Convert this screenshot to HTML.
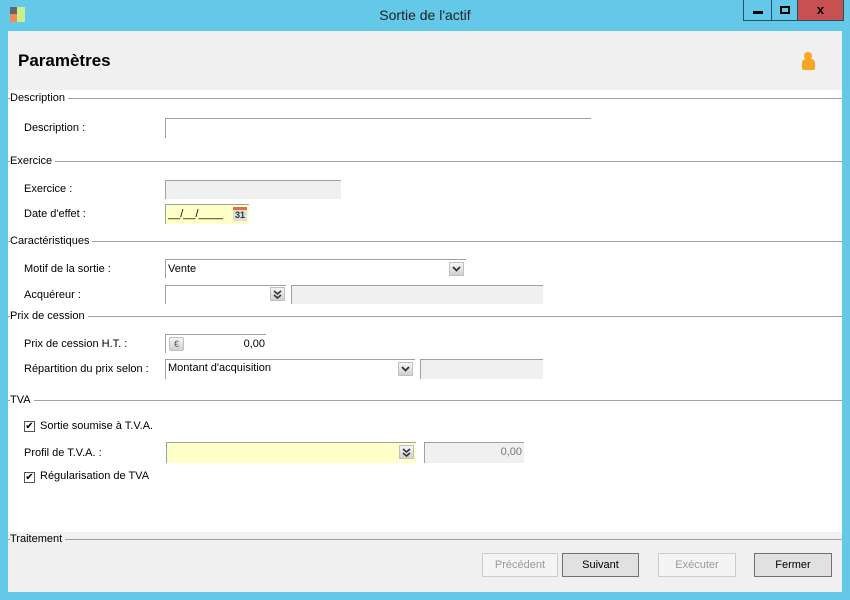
<!DOCTYPE html>
<html><head><meta charset="utf-8"><style>
*{box-sizing:border-box;margin:0;padding:0}
body{width:850px;height:600px;background:#64c8e8;font-family:"Liberation Sans",sans-serif;font-size:11px;color:#000;position:relative;overflow:hidden}
.a{position:absolute}
.client{left:8px;top:31px;width:834px;height:561px;background:#fff}
.t{position:absolute;white-space:nowrap}
.sec{position:absolute;left:8px;width:834px;height:1px;background:#a0a0a0}
.lbl{position:absolute;background:inherit;padding-right:3px;left:10px;font-size:11px}
.in{position:absolute;border-top:1px solid #a0a0a0;border-left:1px solid #a0a0a0;background:#fff;font-size:11px;padding:3px 2px;white-space:nowrap}
.g{background:#f0f0f0}
.y{background:#ffffc8}
.dd{position:absolute;width:15px;height:14px;background:linear-gradient(#f6f6f6,#d0d0d0);border:1px solid #c0c0c0}
.dd svg{position:absolute;left:2px;top:2px}
.btn{position:absolute;top:553px;height:24px;border:1px solid #adadad;background:#e5e5e5;text-align:center;line-height:22px;font-size:11px}
.dis{background:#f4f4f4;border-color:#ccc;color:#999}
.cb{position:absolute;width:11px;height:11px;border:1px solid #555;background:#fff;font-size:10px;line-height:9px;text-align:center}
</style></head><body>
<div class="a" style="left:10px;top:7px;width:7px;height:7px;background:#666"></div>
<div class="a" style="left:10px;top:14px;width:7px;height:8px;background:#f08c5a"></div>
<div class="a" style="left:17px;top:7px;width:8px;height:15px;background:#c8f08c"></div>
<div class="t" style="left:0;width:850px;text-align:center;top:7px;font-size:14px;color:#222">Sortie de l'actif</div>
<div class="a" style="left:743px;top:0;width:29px;height:21px;border:1px solid #2a4e66;border-top:none"></div>
<div class="a" style="left:753px;top:11px;width:10px;height:3px;background:#000"></div>
<div class="a" style="left:771px;top:0;width:27px;height:21px;border:1px solid #2a4e66;border-top:none;border-left:none"></div>
<div class="a" style="left:780px;top:6px;width:10px;height:8px;border:2px solid #000"></div>
<div class="a" style="left:797px;top:0;width:47px;height:21px;background:#c75050;border:1px solid #2a4e66;border-top:none;color:#000;font-weight:bold;text-align:center;font-size:13px;line-height:20px">x</div>
<div class="a client"></div>
<div class="a" style="left:8px;top:31px;width:834px;height:59px;background:#f0f0f0"></div>
<div class="t" style="left:18px;top:51px;font-size:17px;font-weight:bold">Paramètres</div>
<div class="a" style="left:804px;top:52px;width:8px;height:8px;border-radius:50%;background:#f5a623"></div>
<div class="a" style="left:802px;top:59px;width:13px;height:11px;border-radius:4px 4px 2px 2px;background:#f5a623"></div>
<div class="a" style="left:8px;top:532px;width:834px;height:60px;background:#f0f0f0"></div>

<div class="sec" style="top:98px"></div><div class="lbl" style="top:92px;background:#fff">Description</div>
<div class="t" style="left:24px;top:122px">Description :</div>
<div class="in" style="left:165px;top:118px;width:426px;height:20px"></div>

<div class="sec" style="top:161px"></div><div class="lbl" style="top:155px;background:#fff">Exercice</div>
<div class="t" style="left:24px;top:183px">Exercice :</div>
<div class="in g" style="left:165px;top:180px;width:176px;height:19px"></div>
<div class="t" style="left:24px;top:208px">Date d'effet :</div>
<div class="in y" style="left:165px;top:204px;width:84px;height:20px">__/__/____</div>
<div class="a" style="left:233px;top:207px;width:14px;height:14px;background:#ddd;border-top:3px solid #e07040;font-size:9px;font-weight:bold;text-align:center;line-height:11px;color:#333">31</div>

<div class="sec" style="top:241px"></div><div class="lbl" style="top:235px;background:#fff">Caractéristiques</div>
<div class="t" style="left:24px;top:263px">Motif de la sortie :</div>
<div class="in" style="left:165px;top:259px;width:301px;height:19px">Vente</div>
<div class="dd" style="left:449px;top:262px"><svg width="9" height="8"><path d="M1 2 L4.5 5.5 L8 2" stroke="#333" stroke-width="1.8" fill="none"/></svg></div>
<div class="t" style="left:24px;top:289px">Acquéreur :</div>
<div class="in" style="left:165px;top:285px;width:121px;height:19px"></div>
<div class="dd" style="left:270px;top:287px"><svg width="9" height="9"><path d="M1 1 L4.5 4 L8 1 M1 5 L4.5 8 L8 5" stroke="#333" stroke-width="1.6" fill="none"/></svg></div>
<div class="in g" style="left:291px;top:285px;width:252px;height:19px"></div>

<div class="sec" style="top:316px"></div><div class="lbl" style="top:310px;background:#fff">Prix de cession</div>
<div class="t" style="left:24px;top:338px">Prix de cession H.T. :</div>
<div class="in" style="left:165px;top:334px;width:101px;height:19px;text-align:right;padding-right:1px">0,00</div>
<div class="dd" style="left:169px;top:337px;border-radius:2px;font-size:9px;text-align:center;line-height:12px;color:#555">€</div>
<div class="t" style="left:24px;top:363px">Répartition du prix selon :</div>
<div class="in" style="left:165px;top:359px;width:250px;height:20px;padding-top:2px">Montant d'acquisition</div>
<div class="dd" style="left:398px;top:362px"><svg width="9" height="8"><path d="M1 2 L4.5 5.5 L8 2" stroke="#333" stroke-width="1.8" fill="none"/></svg></div>
<div class="in g" style="left:420px;top:359px;width:123px;height:20px"></div>

<div class="sec" style="top:400px"></div><div class="lbl" style="top:394px;background:#fff">TVA</div>
<div class="cb" style="left:24px;top:421px">✔</div>
<div class="t" style="left:40px;top:420px">Sortie soumise à T.V.A.</div>
<div class="t" style="left:24px;top:447px">Profil de T.V.A. :</div>
<div class="in y" style="left:166px;top:442px;width:250px;height:21px"></div>
<div class="dd" style="left:399px;top:445px"><svg width="9" height="9"><path d="M1 1 L4.5 4 L8 1 M1 5 L4.5 8 L8 5" stroke="#333" stroke-width="1.6" fill="none"/></svg></div>
<div class="in g" style="left:424px;top:442px;width:100px;height:21px;text-align:right;color:#777">0,00</div>
<div class="cb" style="left:24px;top:472px">✔</div>
<div class="t" style="left:40px;top:470px">Régularisation de TVA</div>

<div class="sec" style="top:539px"></div><div class="lbl" style="top:533px;background:#f0f0f0">Traitement</div>
<div class="btn dis" style="left:482px;width:76px">Précédent</div>
<div class="btn" style="left:562px;width:77px;background:#e1e1e1;border-color:#707070">Suivant</div>
<div class="btn dis" style="left:658px;width:78px">Exécuter</div>
<div class="btn" style="left:754px;width:78px;background:#e1e1e1;border-color:#707070">Fermer</div>
</body></html>
